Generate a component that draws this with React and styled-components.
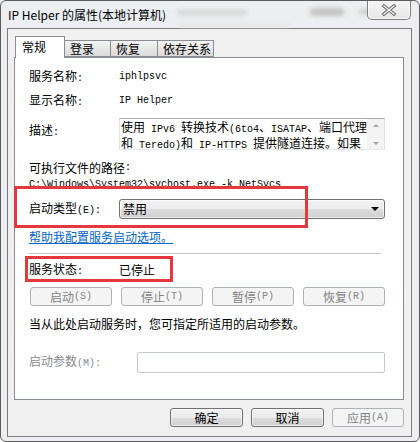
import React from 'react';
import styled, { createGlobalStyle } from 'styled-components';

const GlobalStyle = createGlobalStyle`
  html, body {
    margin: 0;
    padding: 0;
    background: #fff;
  }
  body {
    font-family: "Noto Sans CJK SC", "Liberation Sans", sans-serif;
    font-size: 12px;
    color: #000;
  }
  * {
    box-sizing: border-box;
  }
`;

const Window = styled.div`
  position: relative;
  width: 420px;
  height: 442px;
  border: 1px solid #5b5b5b;
  border-radius: 6px;
  background: #eceef1;
  padding: 0 7px 4px 6px;
  display: flex;
  flex-direction: column;
  overflow: hidden;
`;

const TitleBar = styled.div`
  position: relative;
  height: 27px;
  display: flex;
  align-items: flex-start;
  justify-content: space-between;
`;

// blurred shapes of the desktop seen through the glass frame
const Smudge = styled.span`
  position: absolute;
  left: ${({ $x }) => $x}px;
  top: ${({ $y }) => $y}px;
  width: ${({ $w }) => $w}px;
  height: ${({ $h }) => $h}px;
  border-radius: 4px;
  background: ${({ $c }) => $c};
  filter: blur(2px);
`;

const Title = styled.span`
  position: relative;
  padding: 6px 0 0 1px;
  line-height: 16px;
  font-size: 12px;
  color: #000;
`;

const CloseButton = styled.div`
  position: relative;
  width: 44px;
  height: 20px;
  margin: -1px 1px 0 0;
  border: 1px solid #7d7d7d;
  border-top: none;
  border-radius: 0 0 5px 5px;
  background: linear-gradient(#f6f6f6, #e6e6e6);
  box-shadow: inset 0 0 0 1px rgba(255, 255, 255, 0.7);
  display: flex;
  align-items: center;
  justify-content: center;
`;

const Client = styled.div`
  flex: 1;
  border: 1px solid #7b7b7b;
  background: #f0f0f0;
  padding: 7px 7px 0 6px;
  display: flex;
  flex-direction: column;
`;

const TabStrip = styled.div`
  height: 21px;
  display: flex;
  align-items: flex-end;
  padding-left: 1px;
  position: relative;
  z-index: 1;
`;

const Tab = styled.div`
  width: ${({ $w }) => $w}px;
  height: ${({ $active }) => ($active ? 22 : 17)}px;
  margin-bottom: ${({ $active }) => ($active ? -1 : 0)}px;
  margin-left: ${({ $first }) => ($first ? 0 : -1)}px;
  border: 1px solid #898c95;
  border-bottom: ${({ $active }) => ($active ? 'none' : '1px solid #898c95')};
  background: ${({ $active }) =>
    $active ? '#fff' : 'linear-gradient(#f4f4f4, #e7e7e7 50%, #dadada)'};
  padding: ${({ $active }) => ($active ? '3px 0 0 6px' : '1px 0 0 5px')};
  line-height: 14px;
  white-space: nowrap;
`;

const Panel = styled.div`
  position: relative;
  height: 343px;
  width: 390px;
  border: 1px solid #898c95;
  background: #fff;
  padding: 12px 18px 0 14px;
  display: flex;
  flex-direction: column;
`;

const Mono = styled.span`
  font-family: "Liberation Mono", "DejaVu Sans Mono", monospace;
  font-size: 10px;
`;

const Row = styled.div`
  display: flex;
  align-items: ${({ $top }) => ($top ? 'flex-start' : 'center')};
  height: ${({ $h }) => $h || 14}px;
  margin-top: ${({ $mt }) => $mt || 0}px;
  line-height: 14px;
  white-space: nowrap;
`;

const Label = styled.span`
  flex: none;
  width: ${({ $w }) => $w || 90}px;
  padding-top: ${({ $pt }) => $pt || 0}px;
  color: ${({ $disabled }) => ($disabled ? '#8a8a8a' : '#000')};
`;

const DescBox = styled.div`
  width: 267px;
  height: 32px;
  border: 1px solid #abadb3;
  border-color: #abadb3 #dbdfe6 #e3e9ef #e2e3ea;
  display: flex;
`;

const DescText = styled.div`
  flex: 1;
  padding: 1px 0 0 1px;
  line-height: 13px;
`;

const ScrollBar = styled.div`
  width: 17px;
  background: #f3f3f3;
  display: flex;
  flex-direction: column;
  justify-content: space-between;
  align-items: center;
  padding: 5px 0 4px;
`;

const Arrow = styled.span`
  width: 0;
  height: 0;
  border-left: 3px solid transparent;
  border-right: 3px solid transparent;
  ${({ $down }) =>
    $down ? 'border-top: 3px solid #a8a8a8;' : 'border-bottom: 3px solid #a8a8a8;'}
`;

const Combo = styled.div`
  width: 267px;
  height: 20px;
  border: 1px solid #707070;
  border-radius: 3px;
  background: linear-gradient(#f2f2f2, #ebebeb 50%, #dddddd 51%, #cfcfcf);
  box-shadow: inset 0 0 0 1px rgba(255, 255, 255, 0.6);
  display: flex;
  align-items: center;
  justify-content: space-between;
  padding: 0 5px 0 3px;
`;

const ComboArrow = styled.span`
  width: 0;
  height: 0;
  border-left: 4px solid transparent;
  border-right: 4px solid transparent;
  border-top: 4px solid #000;
`;

const HelpLink = styled.a`
  color: #0066cc;
  text-decoration: underline;
  cursor: pointer;
`;

const Separator = styled.div`
  width: 352px;
  height: 1px;
  margin-top: 9px;
  background: #c4c4c4;
  flex: none;
`;

const ButtonRow = styled.div`
  display: flex;
  gap: ${({ $gap }) => $gap}px;
  margin-top: ${({ $mt }) => $mt || 0}px;
  padding-left: ${({ $pl }) => $pl || 0}px;
  justify-content: ${({ $end }) => ($end ? 'flex-end' : 'flex-start')};
`;

const Button = styled.div`
  width: ${({ $w }) => $w}px;
  height: 19px;
  border-radius: 3px;
  display: flex;
  align-items: center;
  justify-content: center;
  line-height: 14px;
  border: 1px solid ${({ $disabled }) => ($disabled ? '#adb2b5' : '#707070')};
  color: ${({ $disabled }) => ($disabled ? '#838383' : '#000')};
  background: ${({ $disabled }) =>
    $disabled ? '#f4f4f4' : 'linear-gradient(#f2f2f2, #ebebeb 50%, #dddddd 51%, #cfcfcf)'};
  box-shadow: ${({ $disabled }) => ($disabled ? 'none' : 'inset 0 0 0 1px rgba(255,255,255,0.6)')};
`;

const TextInput = styled.div`
  width: 249px;
  height: 21px;
  border: 1px solid #c5c8cc;
  border-radius: 2px;
  background: #fff;
`;

const Highlight = styled.div`
  position: absolute;
  left: ${({ $x }) => $x}px;
  top: ${({ $y }) => $y}px;
  width: ${({ $w }) => $w}px;
  height: ${({ $h }) => $h}px;
  border: 3px solid #e5383d;
  pointer-events: none;
`;

const Footer = styled.div`
  margin-top: 8px;
`;

const CloseIcon = () => (
  <svg width="16" height="12" viewBox="0 0 16 12">
    <path d="M3 2 L13 10 M13 2 L3 10" stroke="#6b6b6b" strokeWidth="3.4" strokeLinecap="square" fill="none" />
    <path d="M3 2 L13 10 M13 2 L3 10" stroke="#f4f4f4" strokeWidth="1.4" strokeLinecap="square" fill="none" />
  </svg>
);

const tabs = [
  { label: '常规', w: 50, active: true },
  { label: '登录', w: 47 },
  { label: '恢复', w: 48 },
  { label: '依存关系', w: 57 },
];

const serviceButtons = [
  ['启动', '(S)'],
  ['停止', '(T)'],
  ['暂停', '(P)'],
  ['恢复', '(R)'],
];

const smudges = [
  { x: 170, y: 8, w: 70, h: 7, c: '#dadada' },
  { x: 303, y: 7, w: 34, h: 8, c: '#c4c4c4' },
  { x: 352, y: 8, w: 12, h: 6, c: '#cfcfcf' },
  { x: 172, y: 23, w: 110, h: 3, c: '#e2e2e2' },
];

export default function App() {
  return (
    <>
      <GlobalStyle />
      <Window>
        <TitleBar>
          {smudges.map((s, i) => (
            <Smudge key={i} $x={s.x} $y={s.y} $w={s.w} $h={s.h} $c={s.c} />
          ))}
          <Title>IP Helper 的属性(本地计算机)</Title>
          <CloseButton>
            <CloseIcon />
          </CloseButton>
        </TitleBar>
        <Client>
          <TabStrip>
            {tabs.map((t, i) => (
              <Tab key={t.label} $w={t.w} $active={t.active} $first={i === 0}>
                {t.label}
              </Tab>
            ))}
          </TabStrip>
          <Panel>
            <Row>
              <Label>服务名称<Mono>:</Mono></Label>
              <Mono>iphlpsvc</Mono>
            </Row>
            <Row $mt={10}>
              <Label>显示名称<Mono>:</Mono></Label>
              <Mono>IP Helper</Mono>
            </Row>
            <Row $mt={10} $h={32} $top>
              <Label $pt={5}>描述<Mono>:</Mono></Label>
              <DescBox>
                <DescText>
                  使用<Mono> IPv6 </Mono>转换技术<Mono>(6to4</Mono>、<Mono>ISATAP</Mono>、端口代理
                  <br />
                  和<Mono> Teredo)</Mono>和<Mono> IP-HTTPS </Mono>提供隧道连接。如果
                </DescText>
                <ScrollBar>
                  <Arrow />
                  <Arrow $down />
                </ScrollBar>
              </DescBox>
            </Row>
            <Row $mt={11}>可执行文件的路径<Mono>:</Mono></Row>
            <Row $mt={3}>
              <Mono>C:\Windows\System32\svchost.exe -k NetSvcs</Mono>
            </Row>
            <Row $mt={7} $h={20}>
              <Label>启动类型<Mono>(E):</Mono></Label>
              <Combo>
                <span>禁用</span>
                <ComboArrow />
              </Combo>
            </Row>
            <Row $mt={11}>
              <HelpLink>帮助我配置服务启动选项。</HelpLink>
            </Row>
            <Separator />
            <Row $mt={9}>
              <Label>服务状态<Mono>:</Mono></Label>
              <span>已停止</span>
            </Row>
            <ButtonRow $gap={9} $mt={10} $pl={1}>
              {serviceButtons.map(([text, key]) => (
                <Button key={text} $w={82} $disabled>
                  {text}
                  <Mono>{key}</Mono>
                </Button>
              ))}
            </ButtonRow>
            <Row $mt={11}>当从此处启动服务时，您可指定所适用的启动参数。</Row>
            <Row $mt={21} $h={21}>
              <Label $w={108} $disabled>启动参数<Mono>(M):</Mono></Label>
              <TextInput />
            </Row>
            <Highlight $x={-1} $y={128} $w={294} $h={42} />
            <Highlight $x={10} $y={198} $w={148} $h={26} />
          </Panel>
          <Footer>
            <ButtonRow $gap={8} $end>
              <Button $w={73}>确定</Button>
              <Button $w={73}>取消</Button>
              <Button $w={72} $disabled>
                应用<Mono>(A)</Mono>
              </Button>
            </ButtonRow>
          </Footer>
        </Client>
      </Window>
    </>
  );
}
